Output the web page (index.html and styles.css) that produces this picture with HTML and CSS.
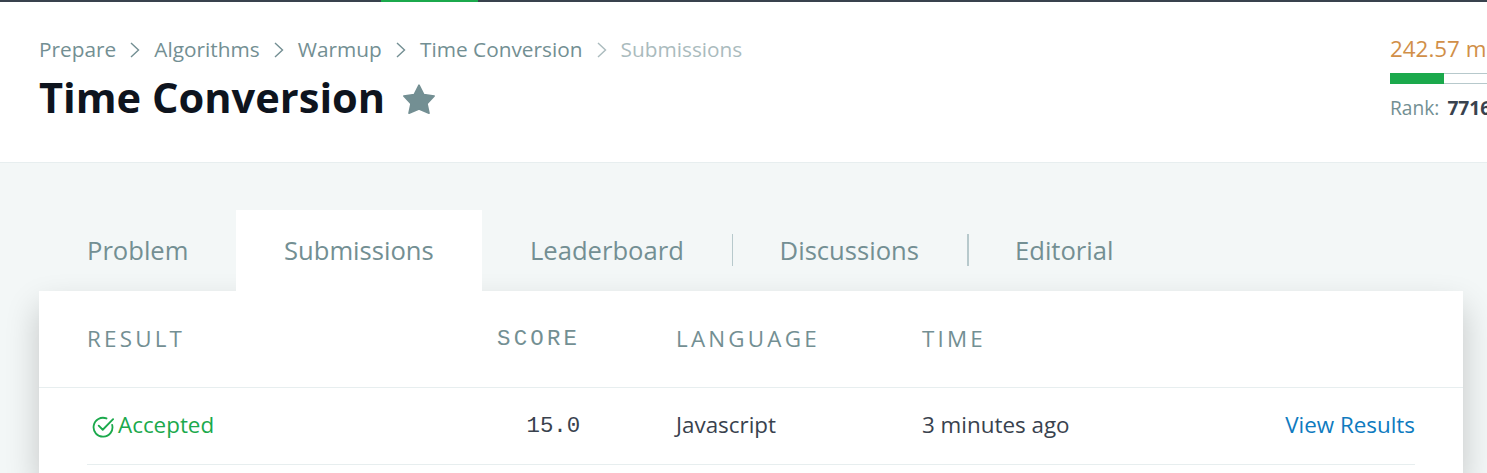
FILE: index.html
```html
<!DOCTYPE html>
<html lang="en">
<head>
<meta charset="utf-8">
<title>Time Conversion | Submissions</title>
<link rel="stylesheet" href="styles.css">
</head>
<body>
<div class="topbar"><span class="topbar-active"></span></div>
<header class="page-header">
  <div class="heading">
    <nav class="breadcrumb">
      <a>Prepare</a>
      <svg class="chevron" viewBox="0 0 10 16"><path d="M1 1l7.5 7L1 15"/></svg>
      <a>Algorithms</a>
      <svg class="chevron" viewBox="0 0 10 16"><path d="M1 1l7.5 7L1 15"/></svg>
      <a>Warmup</a>
      <svg class="chevron" viewBox="0 0 10 16"><path d="M1 1l7.5 7L1 15"/></svg>
      <a>Time Conversion</a>
      <svg class="chevron muted" viewBox="0 0 10 16"><path d="M1 1l7.5 7L1 15"/></svg>
      <span class="muted">Submissions</span>
    </nav>
    <div class="title-row">
      <h1>Time Conversion</h1>
      <svg class="star" viewBox="0 0 34 30"><path d="M17 1.2L21.8 10.6L32.2 12L25 19.6L27 29.2L17 24.9L7 29.2L9 19.6L1.8 12L12.2 10.6Z"/></svg>
    </div>
  </div>
  <div class="rank-panel">
    <div class="points">242.57 more points</div>
    <div class="progress"><div class="progress-fill"></div></div>
    <div class="rank">Rank: <b>771643</b></div>
  </div>
</header>
<main>
  <nav class="tabs">
    <a class="tab problem">Problem</a>
    <a class="tab active">Submissions</a>
    <a class="tab leaderboard">Leaderboard</a>
    <span class="divider"></span>
    <a class="tab discussions">Discussions</a>
    <span class="divider wide"></span>
    <a class="tab editorial">Editorial</a>
  </nav>
  <section class="card">
    <div class="table-head columns">
      <span>RESULT</span><span class="score">SCORE</span><span>LANGUAGE</span><span>TIME</span><span></span>
    </div>
    <div class="table-row columns">
      <span class="accepted"><svg class="check" viewBox="0 0 24 24"><path d="M15.8 2.7A10.3 10.3 0 1 0 22 9.7M7.3 10.5l4.4 4.5L23 3.4"/></svg>Accepted</span>
      <span class="score">15.0</span><span>Javascript</span><span>3 minutes ago</span><a class="view">View Results</a>
    </div>
  </section>
</main>
</body>
</html>
```
FILE: styles.css
```css
* { box-sizing: border-box; }
body {
  margin: 0;
  height: 473px;
  overflow: hidden;
  background: #f3f7f7;
  color: #39424e;
  font-family: "Open Sans", sans-serif;
}
.topbar { height: 2px; background: #39424e; padding-left: 381px; }
.topbar-active { display: block; width: 97px; height: 2px; background: #1ba94c; }
.page-header {
  height: 161px;
  padding: 32px 0 0 39px;
  display: flex;
  justify-content: space-between;
  background: #fff;
  border-bottom: 1px solid #e7eeef;
}
.breadcrumb {
  display: flex;
  align-items: center;
  height: 30px;
  color: #738f93;
  font-size: 20.8px;
}
.chevron { width: 10px; height: 16px; margin: 1px 14px 0 14.2px; fill: none; stroke: #738f93; stroke-width: 1.4; }
.muted { opacity: 0.6; }
.title-row { display: flex; align-items: center; height: 66px; }
h1 { margin: 0; font-size: 41.6px; font-weight: 700; line-height: 56px; color: #0e141e; }
.star { width: 34px; height: 30px; margin: 4px 0 0 17px; fill: #738f93; stroke: #738f93; stroke-width: 1.6; stroke-linejoin: round; }
.rank-panel { width: 97px; flex: none; overflow: hidden; white-space: nowrap; }
.points { height: 39px; line-height: 29px; font-size: 22.4px; color: #d18f48; }
.progress { width: 240px; height: 11px; border: 1px solid #b7c9cc; border-left: 0; }
.progress-fill { width: 54px; height: 11px; margin-top: -1px; background: #1ba94c; }
.rank { margin-top: 10px; line-height: 27px; font-size: 19.2px; color: #738f93; }
.rank b { margin-left: 3px; color: #39424e; }
.tabs { display: flex; align-items: center; height: 128px; padding: 47px 0 0 39px; font-size: 25.6px; color: #738f93; }
.tab { height: 81px; padding: 0 48px; line-height: 81px; }
.active { position: relative; z-index: 1; width: 246px; background: #fff; }
.problem { width: 197px; }
.leaderboard { width: 250px; }
.discussions { width: 234px; padding-left: 46.6px; }
.editorial { padding-left: 47px; }
.divider { width: 1px; height: 32px; margin-bottom: 2px; background: #b7c9cc; }
.divider.wide { width: 2px; margin-right: -1px; }
.card { height: 182px; margin: 0 24px 0 39px; background: #fff; box-shadow: 0 16px 32px rgba(0, 0, 0, 0.2); }
.columns { display: grid; grid-template-columns: 393px 196px 246px 246px 1fr; align-items: center; font-size: 22.4px; }
.score { font-family: "Liberation Mono", monospace; }
.table-head { height: 97px; padding: 0 0 2px 48px; border-bottom: 1px solid #e7eeef; color: #738f93; letter-spacing: 3.2px; }
.table-head .score { padding: 2px 0 0 17px; }
.table-row { height: 77px; margin: 0 48px; padding-bottom: 3px; border-bottom: 1px solid #e7eeef; }
.table-row .score { padding: 3px 0 0 46.5px; }
.accepted { display: flex; align-items: center; padding-left: 5px; color: #1ba94c; }
.check { width: 22px; height: 22px; margin: 4px 4px 0 0; fill: none; stroke: #1ba94c; stroke-width: 2; stroke-linecap: round; stroke-linejoin: round; }
.view { justify-self: end; color: #0f7bbf; }
```
